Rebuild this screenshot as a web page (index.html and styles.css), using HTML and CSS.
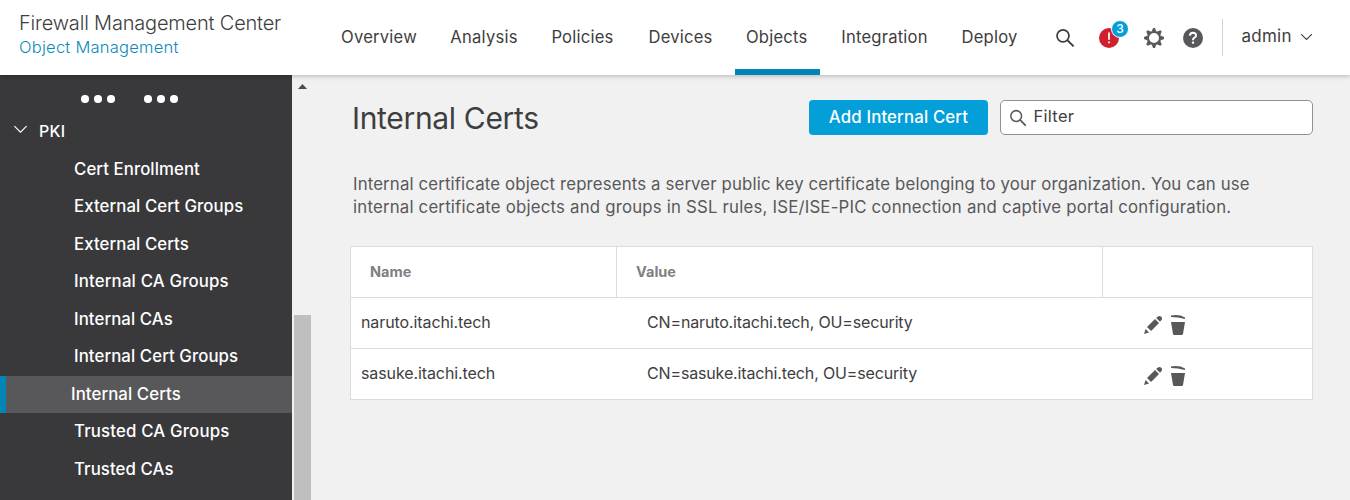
FILE: index.html
```html
<!DOCTYPE html>
<html lang="en">
<head>
<meta charset="utf-8">
<title>Firewall Management Center</title>
<link rel="stylesheet" href="styles.css">
</head>
<body>
<svg class="defs" aria-hidden="true">
  <symbol id="magnifier" viewBox="0 0 20 20"><circle cx="8" cy="7.8" r="6" fill="none" stroke="currentColor" stroke-width="1.7"/><path d="M12.3 12.1 18.6 18.4" stroke="currentColor" stroke-width="2"/></symbol>
  <symbol id="chevron" viewBox="0 0 16 10"><path d="M1.2 1.3 8 8 14.8 1.3" fill="none" stroke="currentColor" stroke-width="1.3"/></symbol>
  <symbol id="pencil" viewBox="0 0 18 18"><path d="M0 18 1.6 13 5 16.4ZM3 10.9 11 3.1 15 7.1 7.1 14.9ZM12.2 2 14 .5Q15.6-.6 17.3.8 18.7 2.5 17.5 4.1L16 5.8Z" fill="currentColor"/></symbol>
  <symbol id="trash" viewBox="0 0 14 20"><path d="M0 .6Q8-1 14 2.6V4Q7 2 0 1.9ZM0 7H14L12 19Q11.8 20 10.8 20H3.2Q2.2 20 2 19Z" fill="currentColor"/></symbol>
</svg>
<header class="topbar">
  <div class="brand"><div class="product">Firewall Management Center</div><div class="section">Object Management</div></div>
  <nav class="nav">
    <a class="overview">Overview</a><a class="analysis">Analysis</a><a class="policies">Policies</a><a class="devices">Devices</a><a class="objects active">Objects</a><a class="integration">Integration</a><a class="deploy">Deploy</a>
  </nav>
  <div class="tools">
    <svg class="search"><use href="#magnifier"/></svg>
    <div class="alert"><svg viewBox="0 0 20 20"><circle cx="10" cy="10" r="10" fill="#cf2030"/><path d="M10 4.5V11.8M10 13.5V15.3" stroke="#fff" stroke-width="1.7"/></svg><span class="badge">3</span></div>
    <svg class="gear" viewBox="-10 -10 20 20"><circle r="6" fill="none" stroke="#58585b" stroke-width="2"/><g fill="#58585b"><path id="tooth" d="M-2.5-6.3-.9-10H.9L2.5-6.3Z"/><use href="#tooth" transform="rotate(45)"/><use href="#tooth" transform="rotate(90)"/><use href="#tooth" transform="rotate(135)"/><use href="#tooth" transform="rotate(180)"/><use href="#tooth" transform="rotate(225)"/><use href="#tooth" transform="rotate(270)"/><use href="#tooth" transform="rotate(315)"/></g></svg>
    <svg class="help" viewBox="0 0 20 20"><circle cx="10" cy="10" r="10" fill="#58585b"/><path d="M6.9 7.6Q7 4.7 10 4.7 13.1 4.8 13 7.4 13 8.8 11.4 9.7 10 10.4 10 12.2" fill="none" stroke="#fff" stroke-width="2"/><path d="M10 13.6V15.7" stroke="#fff" stroke-width="2.2"/></svg>
    <div class="user"><span>admin</span><svg class="caret"><use href="#chevron"/></svg></div>
  </div>
</header>
<div class="body">
  <aside class="sidebar">
    <div class="dots"><i></i><i></i><i></i><i class="second"></i><i></i><i></i></div>
    <div class="group"><svg><use href="#chevron"/></svg><span>PKI</span></div>
    <ul class="tree">
      <li>Cert Enrollment</li><li>External Cert Groups</li><li>External Certs</li><li class="wide">Internal CA Groups</li><li>Internal CAs</li><li>Internal Cert Groups</li><li class="selected">Internal Certs</li><li class="wide">Trusted CA Groups</li><li>Trusted CAs</li>
    </ul>
  </aside>
  <div class="scrollbar"><svg viewBox="0 0 9 5"><path d="M0 5 4.5 0 9 5Z" fill="#4c4c4e"/></svg><div class="thumb"></div></div>
  <main class="content">
    <div class="heading"><h1>Internal Certs</h1><button class="add">Add Internal Cert</button><div class="filter"><svg><use href="#magnifier"/></svg><span>Filter</span></div></div>
    <p class="description">Internal certificate object represents a server public key certificate belonging to your organization. You can use<br><span class="wide">internal certificate objects and groups in SSL rules, ISE/ISE-PIC connection and captive portal configuration.</span></p>
    <div class="table">
      <div class="row head"><div>Name</div><div>Value</div><div></div></div>
      <div class="row"><div>naruto.itachi.tech</div><div>CN=naruto.itachi.tech, OU=security</div><div class="actions"><svg class="edit"><use href="#pencil"/></svg><svg class="delete"><use href="#trash"/></svg></div></div>
      <div class="row"><div>sasuke.itachi.tech</div><div>CN=sasuke.itachi.tech, OU=security</div><div class="actions"><svg class="edit"><use href="#pencil"/></svg><svg class="delete"><use href="#trash"/></svg></div></div>
    </div>
  </main>
</div>
</body>
</html>
```
FILE: styles.css
```css
* { box-sizing: border-box; }
body { margin: 0; width: 1350px; height: 500px; overflow: hidden; display: flex; flex-direction: column; font: 16px/20px Inter, "Liberation Sans", sans-serif; color: #3e3e40; background: #f1f1f1; }
svg { display: block; flex: none; overflow: visible; }
.defs { position: absolute; width: 0; height: 0; }
.topbar { height: 75px; flex: none; display: flex; background: #fff; box-shadow: 0 1px 5px rgba(0,0,0,.25); z-index: 1; }
.brand { width: 322px; padding: 11px 0 0 19px; white-space: nowrap; }
.product { font-size: 20px; line-height: 24px; font-weight: 300; letter-spacing: -.19px; }
.section { font-size: 16.5px; font-weight: 300; line-height: 24px; color: #0a8abb; letter-spacing: .25px; }
.nav { display: flex; width: 733px; }
.nav a { height: 75px; padding-top: 27px; text-align: center; font-size: 16.6px; letter-spacing: .22px; margin-right: 11px; border-bottom: 6px solid transparent; }
.nav .overview { width: 114px; margin-right: 4px; }
.nav .analysis { width: 88px; }
.nav .policies { width: 87px; }
.nav .devices { width: 87px; }
.nav .objects { width: 85px; padding-right: 1.5px; }
.nav .integration { width: 107px; }
.nav .deploy { width: 81px; }
.nav .active { border-color: #0085b4; }
.tools { display: flex; align-items: flex-start; }
.search { width: 20px; height: 20px; margin-top: 28px; }
.alert { position: relative; margin: 28px 0 0 24px; width: 20px; height: 20px; }
.alert svg { width: 20px; height: 20px; }
.badge { position: absolute; left: 12px; top: -8px; width: 18px; height: 18px; border: 1px solid #fff; border-radius: 50%; background: #049fd9; color: #fff; font-size: 12px; font-weight: 500; line-height: 15px; text-align: center; }
.gear { width: 20px; height: 20px; margin: 28px 0 0 25px; }
.help { width: 20px; height: 20px; margin: 28px 0 0 19px; }
.user { display: flex; margin: 19px 0 0 19px; height: 37px; border-left: 1px solid #d3d3d4; padding: 7px 0 0 18.5px; font-size: 17px; letter-spacing: .25px; }
.caret { width: 13px; height: 8px; margin: 7px 0 0 8px; }
.body { flex: 1; display: flex; min-height: 0; }
.sidebar { width: 292px; background: #39393b; color: #fff; font-weight: 500; font-size: 16.8px; }
.dots { display: flex; gap: 5.5px; padding: 20px 0 0 81px; }
.dots i { width: 7.5px; height: 7.5px; border-radius: 50%; background: #fff; }
.dots .second { margin-left: 24px; }
.group { display: flex; padding: 18.5px 0 0 13px; height: 48.1px; font-size: 16px; letter-spacing: .2px; }
.group svg { width: 15px; height: 9px; margin: 4px 11px 0 0; }
.tree { list-style: none; margin: 0; padding: 0; }
.tree li { height: 37.5px; line-height: 37.4px; padding-left: 74px; white-space: nowrap; letter-spacing: .08px; }
.tree .wide { letter-spacing: .17px; }
.tree .selected { height: 37px; margin-bottom: .5px; border-left: 6px solid #0085b4; padding-left: 65px; background: #58585a; }
.scrollbar { width: 19px; padding: 9px 0 0 2px; display: flex; flex-direction: column; }
.scrollbar svg { width: 9px; height: 5px; margin-left: 4px; }
.thumb { width: 17px; flex: 1; margin-top: 226px; background: #bfbfbf; }
.content { padding: 25px 37px 0 39px; flex: 1; }
.heading { display: flex; height: 35px; }
h1 { margin: 0; padding-left: 2px; width: 459px; font-size: 30px; line-height: 37px; font-weight: 400; letter-spacing: -.33px; }
.add { width: 179px; height: 35px; border: 0; border-radius: 4px; padding: 0 0 2px; background: #049fd9; color: #fff; font: 500 16.8px/20px Inter, sans-serif; letter-spacing: .15px; }
.filter { width: 313px; margin-left: 12px; display: flex; border: 1px solid #929294; border-radius: 5px; background: #fff; padding: 5px 8px; font-size: 16.5px; letter-spacing: .3px; }
.filter svg { width: 18px; height: 18px; margin: 3px 6.5px 0 0; color: #58585b; }
.description { margin: 38px 0 0 3px; height: 73px; font-size: 16.8px; line-height: 23px; color: #58585b; letter-spacing: .145px; white-space: nowrap; }
.description .wide { letter-spacing: .2px; }
.table { width: 963px; border: 1px solid #dcdcdd; background: #fff; }
.row { display: grid; grid-template-columns: 265px 486px 210px; height: 51px; line-height: 48px; border-bottom: 1px solid #dcdcdd; white-space: nowrap; }
.row:last-child { border: 0; height: 50px; }
.row > :nth-child(1) { padding-left: 10px; letter-spacing: -.1px; }
.row > :nth-child(2) { padding-left: 31px; letter-spacing: -.15px; }
.row.head { line-height: 50px; font-size: 14.5px; font-weight: 700; color: #807f83; }
.row.head > div { padding-left: 19px; letter-spacing: 0; }
.head > div + div { border-left: 1px solid #dcdcdd; }
.actions { display: flex; }
.edit { width: 18px; height: 18px; margin: 18px 0 0 42px; color: #58585b; }
.delete { width: 14px; height: 20px; margin: 17px 0 0 9px; color: #58585b; }
```
